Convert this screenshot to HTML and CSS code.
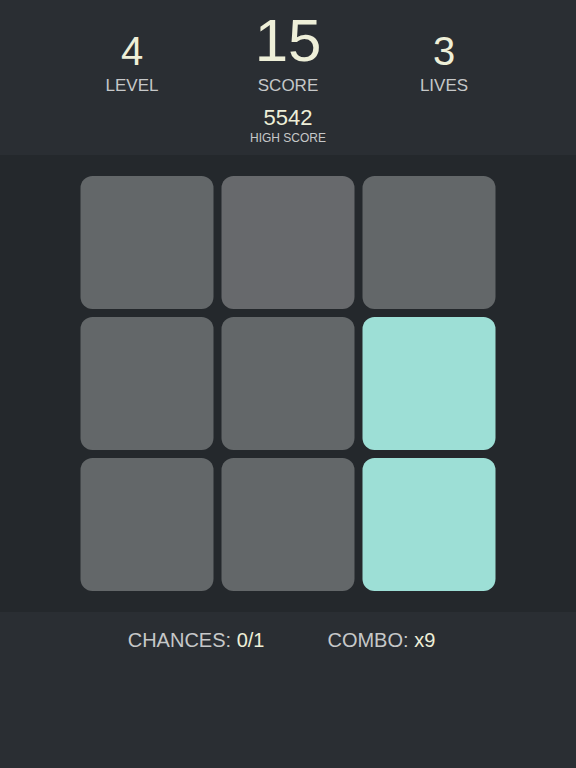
FILE: index.html
```html
<!DOCTYPE html>
<html>
<head>
<meta charset="utf-8">
<link rel="stylesheet" href="styles.css">
</head>
<body>
<header class="top">
  <div class="stats">
    <div class="stat">
      <div class="num">4</div>
      <div class="label">LEVEL</div>
    </div>
    <div class="stat">
      <div class="num big">15</div>
      <div class="label">SCORE</div>
    </div>
    <div class="stat">
      <div class="num">3</div>
      <div class="label">LIVES</div>
    </div>
  </div>
  <div class="high">
    <div class="high-num">5542</div>
    <div class="high-label">HIGH SCORE</div>
  </div>
</header>
<main class="board">
  <div class="grid">
    <div class="tile"></div>
    <div class="tile alt"></div>
    <div class="tile"></div>
    <div class="tile"></div>
    <div class="tile"></div>
    <div class="tile on"></div>
    <div class="tile"></div>
    <div class="tile"></div>
    <div class="tile on"></div>
  </div>
</main>
<footer class="bottom">
  <div class="info">CHANCES: <span class="val">0/1</span></div>
  <div class="info">COMBO: <span class="val">x9</span></div>
</footer>
</body>
</html>
```
FILE: styles.css
```css
html, body {
  margin: 0;
  padding: 0;
}
body {
  width: 576px;
  height: 768px;
  background: #2a2e33;
  font-family: "Liberation Sans", Arial, sans-serif;
  display: flex;
  flex-direction: column;
  overflow: hidden;
}
.top {
  background: #2a2e33;
  height: 155px;
  box-sizing: border-box;
  padding-top: 11px;
}
.stats {
  display: grid;
  grid-template-columns: 156px 156px 156px;
  justify-content: center;
  align-items: end;
}
.stat {
  display: flex;
  flex-direction: column;
  align-items: center;
}
.num {
  font-size: 40px;
  line-height: 1;
  color: #eeefd8;
}
.num.big {
  font-size: 60px;
}
.label {
  margin-top: 6px;
  font-size: 17px;
  line-height: 18px;
  color: #c6c8c9;
}
.high {
  display: flex;
  flex-direction: column;
  align-items: center;
  margin-top: 12px;
}
.high-num {
  font-size: 22px;
  line-height: 1;
  color: #eeefd8;
}
.high-label {
  margin-top: 3px;
  font-size: 12px;
  line-height: 13px;
  color: #c6c8c9;
}
.board {
  background: #24282c;
  padding: 21px 0;
  display: flex;
  justify-content: center;
}
.grid {
  display: grid;
  grid-template-columns: repeat(3, 133px);
  grid-template-rows: repeat(3, 133px);
  gap: 8px;
  transform: translateX(-0.5px);
}
.tile {
  background: #636769;
  border-radius: 12px;
}
.tile.alt {
  background: #67696c;
}
.tile.on {
  background: #9ddfd6;
}
.bottom {
  flex: 1;
  background: #2a2e33;
  display: flex;
  justify-content: center;
  gap: 63px;
  padding: 18px 13px 0 0;
}
.info {
  font-size: 20px;
  line-height: 1;
  color: #c6c8c9;
  height: 20px;
}
.val {
  color: #eeefd8;
}
```
